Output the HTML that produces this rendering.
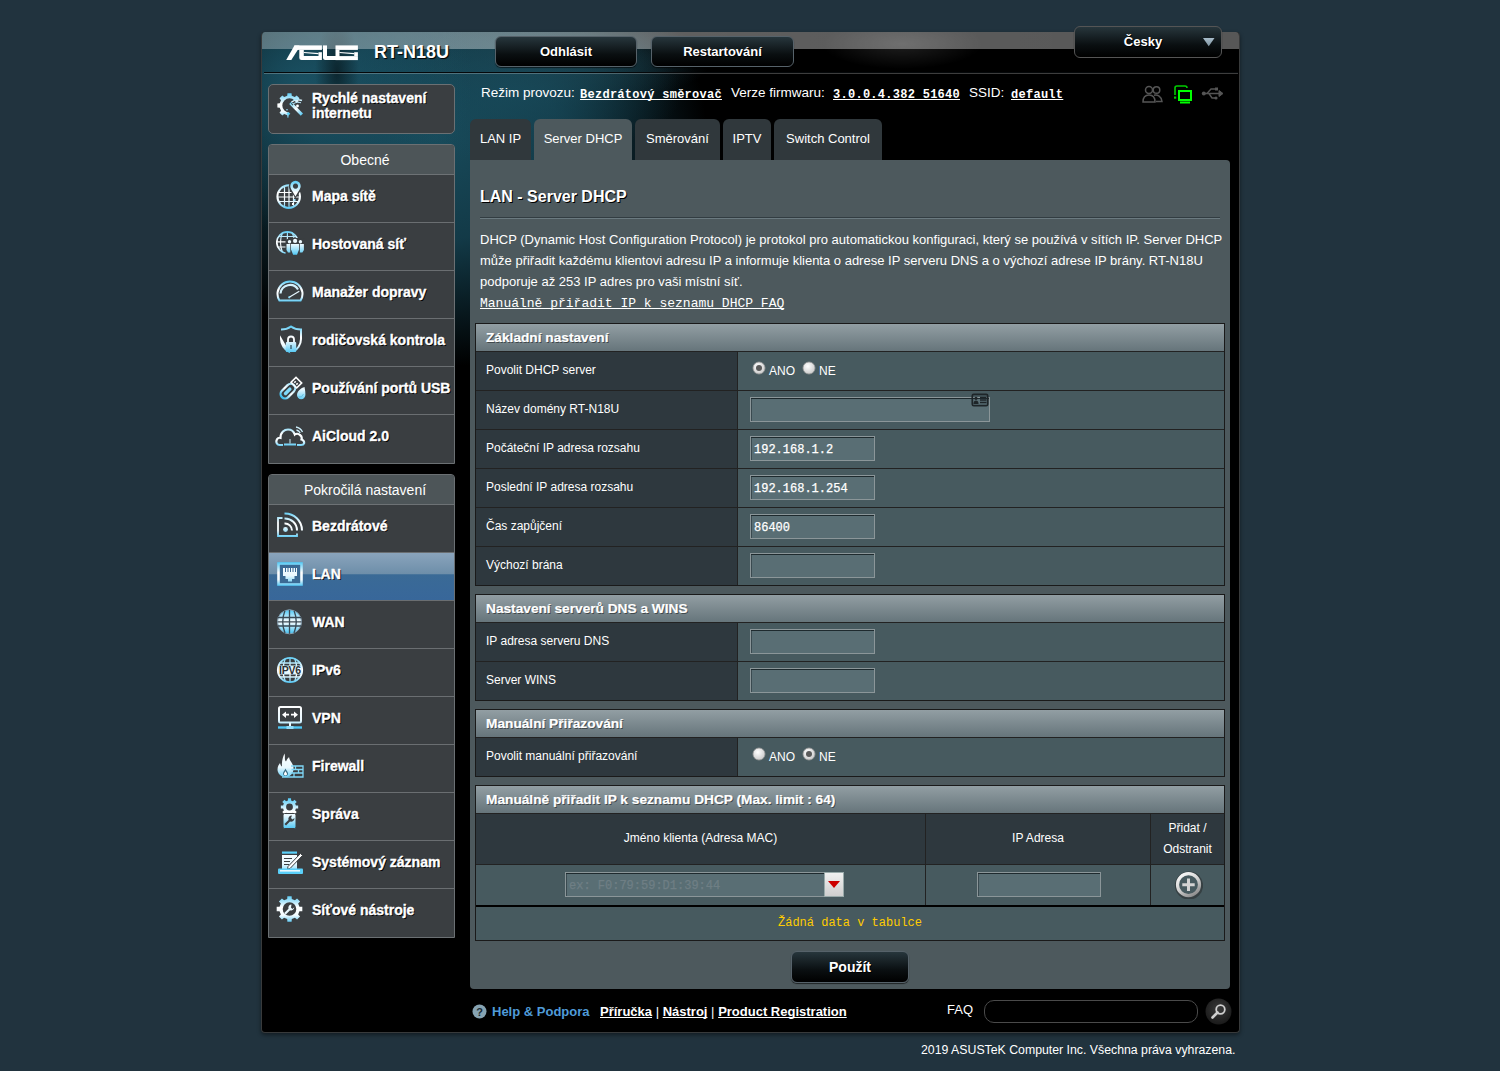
<!DOCTYPE html>
<html><head><meta charset="utf-8">
<style>
*{box-sizing:border-box;margin:0;padding:0}
html,body{width:1500px;height:1071px;overflow:hidden;background:#21333e;font-family:"Liberation Sans",sans-serif;color:#fff}
.a{position:absolute}
#wrap{position:absolute;left:261px;top:32px;width:979px;height:1001px;background:#000;border-radius:4px;overflow:hidden;border:1px solid #383a3b;border-top:none;box-shadow:0 2px 4px rgba(0,0,0,.45)}
#hdrbg{position:absolute;left:0;top:0;width:979px;height:420px;
 background:
  radial-gradient(22px 55px at 75px 40px, rgba(0,0,0,.5), rgba(0,0,0,0) 100%),
  radial-gradient(80px 25px at 640px 12px, rgba(255,255,255,.12), rgba(255,255,255,0) 100%),
  radial-gradient(170px 150px at 40px 50px, rgba(28,86,105,.85), rgba(28,86,105,0) 100%),
  radial-gradient(170px 70px at 250px 60px, rgba(24,74,90,.8), rgba(24,74,90,0) 100%),
  radial-gradient(150px 45px at 300px 28px, rgba(30,66,78,.85), rgba(30,66,78,0) 100%),
  radial-gradient(270px 230px at 175px 105px, rgba(24,74,90,1) 0%, rgba(22,68,84,.85) 45%, rgba(20,62,78,0) 100%),
  #000;}
#topband{position:absolute;left:0;top:0;width:979px;height:17px;
 background:linear-gradient(90deg,rgba(255,255,255,.3) 0px,rgba(255,255,255,.36) 200px,rgba(255,255,255,.38) 330px,rgba(255,255,255,.36) 600px,rgba(255,255,255,.34) 979px)}
#hline{position:absolute;left:2px;top:40px;width:974px;height:2px;background:linear-gradient(#05080a 50%,rgba(255,255,255,.24) 50%)}
.btn{position:absolute;border-radius:6px;border:1px solid #56626a;background:linear-gradient(#27363c,#0a0f11 60%,#000);box-shadow:0 1px 1px rgba(0,0,0,.6);font-weight:bold;font-size:13px;text-align:center;color:#fff;text-shadow:1px 1px 0 #000}
.sbox{position:absolute;left:268px;width:187px;background:#3a3e41;border:1px solid #6b7073;border-radius:4px 4px 0 0;overflow:hidden}
.shead{height:30px;background:#4d5558;border-bottom:1px solid #6d7275;text-align:center;font-size:14px;line-height:30px;color:#fff;padding-left:7px}
.mi{position:relative;height:48px;border-top:1px solid #6a6e71;font-weight:bold;font-size:14px;line-height:42px;padding-left:43px;text-shadow:1px 1px 0 #000;color:#fff;white-space:nowrap;-webkit-text-stroke:0.35px #fff}
.shead + .mi{border-top:none;height:47px}
.mi.sel{background:linear-gradient(#8aa4bc 0,#6d8ea9 45%,#3a6a96 46%,#38679a 100%)}
.tab{position:absolute;top:119px;height:41px;background:#30383c;border-radius:6px 6px 0 0;font-size:13px;line-height:40px;text-align:center;color:#fff}
.tab.on{background:#4d595d}
#panel{position:absolute;left:470px;top:160px;width:760px;height:829px;background:#4d595d;border-radius:0 4px 4px 4px}
.ft{position:absolute;left:475px;width:750px;border:1px solid #1a1a1a}
.th{height:27px;background:linear-gradient(#929ea3,#66757b);font-weight:bold;font-size:13.7px;line-height:27px;padding-left:10px;text-shadow:1px 1px 0 rgba(0,0,0,.45);white-space:nowrap;-webkit-text-stroke:0.2px #fff}
.row{position:relative;height:39px;border-top:1px solid #222}
.row .l{position:absolute;left:0;top:0;width:262px;height:38px;background:#2e383e;border-right:1px solid #222;font-size:12px;line-height:36px;padding-left:10px}
.row .v{position:absolute;left:262px;top:0;right:0;height:38px;background:#475a5f}
.inp{position:absolute;background:#596e74;border:1px solid #8b9699;box-shadow:inset 0 1px 0 #1e2a2e,inset 1px 0 0 #3a4a50;font-family:"Liberation Mono",monospace;font-size:12px;line-height:23px;padding-left:3px;padding-top:2px;color:#fff;white-space:nowrap;-webkit-text-stroke:0.25px currentColor}
.mono{font-family:"Liberation Mono",monospace}
u,.ul{text-decoration:underline;text-decoration-skip-ink:none}
*{text-decoration-skip-ink:none}
</style></head>
<body>
<div id="wrap">
 <div id="hdrbg"></div>
 <div id="topband"></div>
 <div id="hline"></div>
</div>
<svg class="a" style="left:282px;top:40px" width="80" height="26" viewBox="0 0 80 26">
 <g fill="#fff">
  <path d="M4.2 20.1 L9.3 20.1 L17.3 7.5 L17.3 5.4 L12.4 5.4Z"/>
  <rect x="12.4" y="5.4" width="27.5" height="4.5"/>
  <path d="M17.3 9.9 H21.8 V16.1 H17.3Z"/>
  <path d="M21.8 11.9 L36.5 12.9 L36.5 14.2 L21.8 13.1Z"/>
  <path d="M36.5 12.2 H39.9 V16.1 H36.5Z"/>
  <path d="M17.3 16.1 H39.9 V20.1 H19.5 Q17.3 20.1 17.3 18Z"/>
  <path d="M41 5.4 H45 V16.1 H41Z"/>
  <path d="M41 16.1 H57.5 V20.1 H43.2 Q41 20.1 41 18Z"/>
  <rect x="53.5" y="5.4" width="22.4" height="4.5"/>
  <path d="M53.5 9.9 H57.5 V16.1 H53.5Z"/>
  <path d="M57.5 11.9 L72.2 12.9 L72.2 14.2 L57.5 13.1Z"/>
  <path d="M72.2 12.2 H75.9 V16.1 H72.2Z"/>
  <path d="M53.5 16.1 H75.9 V20.1 H53.5Z"/>
 </g>
</svg>
<div class="a" style="left:374px;top:41px;font-size:18px;font-weight:bold;line-height:22px;text-shadow:1px 1px 1px #000">RT-N18U</div>
<div class="btn" style="left:495px;top:36px;width:142px;height:31px;line-height:29px">Odhlásit</div>
<div class="btn" style="left:651px;top:36px;width:143px;height:31px;line-height:29px">Restartování</div>
<div class="btn" style="left:1074px;top:26px;width:148px;height:32px;line-height:30px;border-color:#555;padding-right:10px">Česky</div>
<svg class="a" style="left:1203px;top:38px" width="12" height="9"><defs><linearGradient id="tg" x1="0" y1="0" x2="0" y2="1"><stop offset="0" stop-color="#a9bdca"/><stop offset="1" stop-color="#7f95a3"/></linearGradient></defs><path d="M0 0 L11.5 0 L5.75 8.2Z" fill="url(#tg)"/></svg>
<div class="a" style="left:481px;top:85px;font-size:13.5px;line-height:16px;white-space:nowrap">Režim provozu:</div>
<div class="a mono" style="left:580px;top:87px;font-size:12px;letter-spacing:.27px;line-height:16px;font-weight:bold;white-space:nowrap"><u>Bezdrátový směrovač</u></div>
<div class="a" style="left:731px;top:85px;font-size:13.5px;line-height:16px;white-space:nowrap">Verze firmwaru:</div>
<div class="a mono" style="left:833px;top:87px;font-size:12px;letter-spacing:.27px;line-height:16px;font-weight:bold;white-space:nowrap"><u>3.0.0.4.382_51640</u></div>
<div class="a" style="left:969px;top:85px;font-size:13.5px;line-height:16px;white-space:nowrap">SSID:</div>
<div class="a mono" style="left:1011px;top:87px;font-size:12px;letter-spacing:.27px;line-height:16px;font-weight:bold;white-space:nowrap"><u>default</u></div>

<div class="sbox" style="top:84px;height:50px;border-radius:5px"></div>
<div class="a" style="left:312px;top:91px;font-weight:bold;font-size:14px;line-height:15px;text-shadow:1px 1px 0 #000;-webkit-text-stroke:0.35px #fff">Rychlé nastavení<br>internetu</div>
<div class="sbox" style="top:144px;height:320px">
 <div class="shead">Obecné</div>
 <div class="mi">Mapa sítě</div>
 <div class="mi">Hostovaná síť</div>
 <div class="mi">Manažer dopravy</div>
 <div class="mi">rodičovská kontrola</div>
 <div class="mi">Používání portů USB</div>
 <div class="mi">AiCloud 2.0</div>
</div>
<div class="sbox" style="top:474px;height:464px">
 <div class="shead">Pokročilá nastavení</div>
 <div class="mi">Bezdrátové</div>
 <div class="mi sel">LAN</div>
 <div class="mi">WAN</div>
 <div class="mi">IPv6</div>
 <div class="mi">VPN</div>
 <div class="mi">Firewall</div>
 <div class="mi">Správa</div>
 <div class="mi">Systémový záznam</div>
 <div class="mi">Síťové nástroje</div>
</div>

<div class="tab" style="left:470px;width:61px">LAN IP</div>
<div class="tab on" style="left:534px;width:98px">Server DHCP</div>
<div class="tab" style="left:635px;width:85px">Směrování</div>
<div class="tab" style="left:723px;width:48px">IPTV</div>
<div class="tab" style="left:774px;width:108px">Switch Control</div>

<div id="panel"></div>
<div class="a" style="left:480px;top:187px;font-size:16px;font-weight:bold;line-height:20px;text-shadow:1px 1px 0 #000">LAN - Server DHCP</div>
<div class="a" style="left:480px;top:217px;width:740px;height:1px;background:#323d42"></div><div class="a" style="left:480px;top:218px;width:740px;height:1px;background:#6b7a80"></div>
<div class="a" style="left:480px;top:229px;width:750px;font-size:13px;line-height:21px;white-space:nowrap">DHCP (Dynamic Host Configuration Protocol) je protokol pro automatickou konfiguraci, který se používá v sítích IP. Server DHCP<br>může přiřadit každému klientovi adresu IP a informuje klienta o adrese IP serveru DNS a o výchozí adrese IP brány. RT-N18U<br>podporuje až 253 IP adres pro vaši místní síť.<br><span class="mono" style="font-size:13px;text-decoration:underline">Manuálně přiřadit IP k seznamu DHCP FAQ</span></div>

<div class="ft" style="top:323px;height:263px">
 <div class="th">Základní nastavení</div>
 <div class="row"><div class="l">Povolit DHCP server</div><div class="v"></div></div>
 <div class="row"><div class="l">Název domény RT-N18U</div><div class="v"></div></div>
 <div class="row"><div class="l">Počáteční IP adresa rozsahu</div><div class="v"></div></div>
 <div class="row"><div class="l">Poslední IP adresa rozsahu</div><div class="v"></div></div>
 <div class="row"><div class="l">Čas zapůjčení</div><div class="v"></div></div>
 <div class="row"><div class="l">Výchozí brána</div><div class="v"></div></div>
</div>
<div class="ft" style="top:594px;height:107px">
 <div class="th">Nastavení serverů DNS a WINS</div>
 <div class="row"><div class="l">IP adresa serveru DNS</div><div class="v"></div></div>
 <div class="row"><div class="l">Server WINS</div><div class="v"></div></div>
</div>
<div class="ft" style="top:709px;height:68px">
 <div class="th">Manuální Přiřazování</div>
 <div class="row"><div class="l">Povolit manuální přiřazování</div><div class="v"></div></div>
</div>
<div class="ft" style="top:785px;height:156px;background:#475a5f">
 <div class="th">Manuálně přiřadit IP k seznamu DHCP (Max. limit : 64)</div>
 <div class="a" style="left:0;top:27px;width:748px;height:51px;background:#2e383e;border-top:1px solid #222"></div>
 <div class="a" style="left:0;top:78px;width:748px;height:42px;background:#475a5f;border-top:1px solid #222"></div>
 <div class="a" style="left:449px;top:27px;width:1px;height:93px;background:#222"></div>
 <div class="a" style="left:674px;top:27px;width:1px;height:93px;background:#222"></div>
 <div class="a" style="left:0;top:119px;width:748px;height:2px;background:#000"></div>
</div>
<div class="a" style="left:476px;top:813px;width:449px;height:51px;font-size:12px;line-height:51px;text-align:center">Jméno klienta (Adresa MAC)</div>
<div class="a" style="left:926px;top:813px;width:224px;height:51px;font-size:12px;line-height:51px;text-align:center">IP Adresa</div>
<div class="a" style="left:1151px;top:818px;width:73px;font-size:12px;line-height:21px;text-align:center">Přidat /<br>Odstranit</div>
<div class="inp" style="left:565px;top:872px;width:260px;height:25px;color:#6f7f85">ex: F0:79:59:D1:39:44</div>
<div class="a" style="left:824px;top:872px;width:20px;height:25px;background:linear-gradient(#f0f0f0,#cfcfcf);border:1px solid #9aa;"></div>
<svg class="a" style="left:828px;top:881px" width="12" height="8"><path d="M0 0 H12 L6 7Z" fill="#c00"/></svg>
<div class="inp" style="left:977px;top:872px;width:124px;height:25px"></div>
<svg class="a" style="left:1174px;top:870px" width="29" height="29" viewBox="0 0 29 29">
 <defs><linearGradient id="pg" x1="0.2" y1="0" x2="0.8" y2="1"><stop offset="0" stop-color="#f8f8f8"/><stop offset=".5" stop-color="#d0d0d0"/><stop offset="1" stop-color="#8a8a8a"/></linearGradient></defs>
 <circle cx="15" cy="15.5" r="12.5" fill="none" stroke="#222" stroke-opacity=".45" stroke-width="3.2"/>
 <circle cx="14.5" cy="14.7" r="11" fill="none" stroke="url(#pg)" stroke-width="3.2"/>
 <path d="M13 8.5 H16 V13.2 H20.7 V16.2 H16 V20.9 H13 V16.2 H8.3 V13.2 H13Z" fill="#d4d4d4"/>
</svg>
<div class="a mono" style="left:476px;top:908px;width:748px;height:33px;line-height:31px;font-size:12px;text-align:center;color:#ffcc00">Žádná data v tabulce</div>
<div class="inp" style="left:750px;top:397px;width:240px;height:25px"></div>
<svg class="a" style="left:971px;top:393px" width="18" height="14" viewBox="0 0 18 14"><rect x="1.3" y="1.3" width="15.4" height="11.4" rx="1.5" fill="none" stroke="#1e2528" stroke-width="1.7"/><circle cx="5" cy="5.3" r="1.6" fill="#1e2528"/><path d="M2.4 11 C2.6 8.5 3.6 7.6 5 7.6 C6.4 7.6 7.4 8.5 7.6 11Z" fill="#1e2528"/><path d="M9 4.5 H15.5 M9 7 H15.5 M9 9.5 H15.5" stroke="#1e2528" stroke-width="1.3"/></svg>
<div class="inp" style="left:750px;top:436px;width:125px;height:25px">192.168.1.2</div>
<div class="inp" style="left:750px;top:475px;width:125px;height:25px">192.168.1.254</div>
<div class="inp" style="left:750px;top:514px;width:125px;height:25px">86400</div>
<div class="inp" style="left:750px;top:553px;width:125px;height:25px"></div>
<div class="inp" style="left:750px;top:629px;width:125px;height:25px"></div>
<div class="inp" style="left:750px;top:668px;width:125px;height:25px"></div>
<svg class="a" style="left:752px;top:361px" width="14" height="14"><defs><radialGradient id="rg" cx=".4" cy=".35" r=".7"><stop offset="0" stop-color="#fff"/><stop offset="1" stop-color="#c8c8c8"/></radialGradient></defs><circle cx="7" cy="7" r="6" fill="url(#rg)" stroke="#9a9a9a" stroke-width=".8"/><circle cx="7" cy="7" r="3" fill="#5a5a5a"/></svg>
<svg class="a" style="left:802px;top:361px" width="14" height="14"><circle cx="7" cy="7" r="6" fill="url(#rg)" stroke="#9a9a9a" stroke-width=".8"/></svg>
<div class="a" style="left:769px;top:363px;font-size:12px;line-height:16px">ANO</div>
<div class="a" style="left:819px;top:363px;font-size:12px;line-height:16px">NE</div>
<svg class="a" style="left:752px;top:747px" width="14" height="14"><circle cx="7" cy="7" r="6" fill="url(#rg)" stroke="#9a9a9a" stroke-width=".8"/></svg>
<svg class="a" style="left:802px;top:747px" width="14" height="14"><circle cx="7" cy="7" r="6" fill="url(#rg)" stroke="#9a9a9a" stroke-width=".8"/><circle cx="7" cy="7" r="3" fill="#5a5a5a"/></svg>
<div class="a" style="left:769px;top:749px;font-size:12px;line-height:16px">ANO</div>
<div class="a" style="left:819px;top:749px;font-size:12px;line-height:16px">NE</div>

<!-- footer -->
<svg class="a" style="left:472px;top:1004px" width="15" height="15"><circle cx="7.5" cy="7.5" r="7" fill="#86a3b2"/><text x="7.5" y="11.8" text-anchor="middle" font-family="Liberation Sans" font-weight="bold" font-size="11" fill="#1a2a33">?</text></svg>
<div class="a" style="left:492px;top:1003px;font-size:13px;font-weight:bold;line-height:18px;color:#4f9bd8;white-space:nowrap">Help &amp; Podpora</div>
<div class="a" style="left:600px;top:1003px;font-size:13px;line-height:18px;font-weight:bold;white-space:nowrap"><u>Příručka</u> <span style="font-weight:normal">|</span> <u>Nástroj</u> <span style="font-weight:normal">|</span> <u>Product Registration</u></div>
<div class="a" style="left:947px;top:1001px;font-size:13px;line-height:18px">FAQ</div>
<div class="a" style="left:984px;top:1000px;width:214px;height:23px;border:1px solid #4a4a4a;border-radius:10px;background:#000"></div>
<svg class="a" style="left:1205px;top:998px" width="27" height="27"><defs><radialGradient id="sg" cx=".5" cy=".4" r=".6"><stop offset="0" stop-color="#3a3a3a"/><stop offset="1" stop-color="#1a1a1a"/></radialGradient></defs><circle cx="13.5" cy="13.5" r="13" fill="url(#sg)"/><circle cx="15.5" cy="11.5" r="4.3" fill="none" stroke="#cfcfcf" stroke-width="1.8"/><path d="M12.5 14.5 L7.5 19.5" stroke="#cfcfcf" stroke-width="2.6" stroke-linecap="round"/></svg>
<div class="a" style="left:921px;top:1042px;font-size:12.3px;line-height:16px;white-space:nowrap">2019 ASUSTeK Computer Inc. Všechna práva vyhrazena.</div>

<!-- status icons -->
<svg class="a" style="left:1142px;top:85px" width="22" height="18" viewBox="0 0 22 18" fill="none" stroke="#555" stroke-width="1.5"><circle cx="7" cy="5" r="3.5"/><path d="M1 17 C1 12 3.5 10 7 10 C10.5 10 13 12 13 17Z"/><circle cx="14.5" cy="5" r="3.3"/><path d="M12 10.2 C15.5 9.5 19.5 11 20 16.5 H14"/></svg>
<svg class="a" style="left:1173px;top:85px" width="20" height="19" viewBox="0 0 20 19"><path d="M2 10 V3 a2 2 0 0 1 2 -2 H12 a2 2 0 0 1 2 2" fill="none" stroke="#0c0" stroke-width="1.6"/><rect x="1" y="11.5" width="2.2" height="2.2" fill="#0c0"/><rect x="6" y="6" width="12" height="9" fill="none" stroke="#0f0" stroke-width="2"/><rect x="7" y="16.5" width="10" height="2" fill="#0f0"/></svg>
<svg class="a" style="left:1201px;top:86px" width="23" height="15" viewBox="0 0 23 15" fill="none" stroke="#555"><path d="M2.5 7.5 H21" stroke-width="1.5"/><path d="M18 4.5 L22 7.5 L18 10.5Z" fill="#555"/><circle cx="2.8" cy="7.5" r="2" fill="#555" stroke="none"/><path d="M6 7.5 L10 3 H14" stroke-width="1.4"/><path d="M8 7.5 L11 12 H14" stroke-width="1.4"/><rect x="14" y="1.5" width="3" height="3" fill="#555" stroke="none"/><circle cx="15" cy="12" r="1.6" fill="#555" stroke="none"/></svg>
<div class="btn" style="left:791px;top:951px;width:118px;height:32px;line-height:30px;font-size:14px">Použít</div>
<svg width="0" height="0" style="position:absolute"><defs>
<linearGradient id="ig" x1="0" y1="0" x2="0" y2="1"><stop offset="0" stop-color="#4ec8f5"/><stop offset=".42" stop-color="#ffffff"/><stop offset=".7" stop-color="#f2fbff"/><stop offset="1" stop-color="#35bdf2"/></linearGradient>
<linearGradient id="igr" x1="0" y1="1" x2="0" y2="0"><stop offset="0" stop-color="#3cc0f2"/><stop offset=".5" stop-color="#ffffff"/><stop offset="1" stop-color="#4ec8f5"/></linearGradient>
<linearGradient id="ig2" x1="0" y1="0" x2="1" y2="1"><stop offset="0" stop-color="#55cdf7"/><stop offset=".5" stop-color="#ffffff"/><stop offset="1" stop-color="#3cc0f2"/></linearGradient>
<linearGradient id="igw" x1="0" y1="0" x2="0" y2="1"><stop offset="0" stop-color="#c9effd"/><stop offset=".5" stop-color="#ffffff"/><stop offset="1" stop-color="#d8f3fe"/></linearGradient>
<linearGradient id="usbg" x1="0" y1="0" x2="1" y2="0"><stop offset="0" stop-color="#3cc0f2"/><stop offset=".5" stop-color="#ffffff"/><stop offset="1" stop-color="#8fdcf8"/></linearGradient>
<linearGradient id="igb" x1="0" y1="0" x2="0" y2="1"><stop offset="0" stop-color="#ffffff"/><stop offset=".55" stop-color="#e9f8fe"/><stop offset="1" stop-color="#3fc2f3"/></linearGradient>
</defs></svg>
<svg class="a" style="left:277px;top:92px" width="28" height="28" viewBox="0 0 28 28"><defs><linearGradient id="u1" gradientUnits="userSpaceOnUse" x1="0" y1="0" x2="0" y2="28"><stop offset="0" stop-color="#4ec8f5"/><stop offset=".42" stop-color="#ffffff"/><stop offset=".7" stop-color="#f2fbff"/><stop offset="1" stop-color="#35bdf2"/></linearGradient><linearGradient id="v1" gradientUnits="userSpaceOnUse" x1="0" y1="0" x2="0" y2="28"><stop offset="0" stop-color="#ffffff"/><stop offset=".55" stop-color="#e9f8fe"/><stop offset="1" stop-color="#3fc2f3"/></linearGradient></defs><path fill="url(#u1)" fill-rule="evenodd" d="M10.24 3.76 L10.48 1.37 L14.52 1.37 L14.76 3.76 L17.79 5.01 L19.65 3.49 L22.51 6.35 L20.99 8.21 L22.24 11.24 L24.63 11.48 L24.63 15.52 L22.24 15.76 L20.99 18.79 L22.51 20.65 L19.65 23.51 L17.79 21.99 L14.76 23.24 L14.52 25.63 L10.48 25.63 L10.24 23.24 L7.21 21.99 L5.35 23.51 L2.49 20.65 L4.01 18.79 L2.76 15.76 L0.37 15.52 L0.37 11.48 L2.76 11.24 L4.01 8.21 L2.49 6.35 L5.35 3.49 L7.21 5.01Z M5.30 13.50 a7.2 7.2 0 1 0 14.4 0 a7.2 7.2 0 1 0 -14.4 0Z"/><path fill="#3a3e41" d="M12.5 13.5 L30 6 L30 30 L11 30Z"/><path fill="none" stroke="url(#ig2)" stroke-width="1.5" d="M14.5 10 C17.5 7.5 21.5 7.2 25 8.5"/><path fill="none" stroke="#bfe9fb" stroke-width="1" d="M16 12 C19 10 21.5 10 24 10.8"/><path fill="url(#ig2)" d="M12.2 12 L14.4 9.8 L26 21.6 L23.8 23.8Z"/><path fill="#3a3e41" d="M13.8 11.6 L14.5 10.9 L16.3 12.7 L15.6 13.4Z"/><path fill="#5ad0f9" d="M11.5 20 L13.3 21.8 L11.5 23.6 L9.7 21.8Z"/><circle cx="20.5" cy="14" r="1.4" fill="#fff"/><circle cx="10" cy="17.8" r=".8" fill="#9fe0fa"/></svg>
<svg class="a" style="left:276px;top:180px" width="28" height="30" viewBox="0 0 28 30"><defs><linearGradient id="u2" gradientUnits="userSpaceOnUse" x1="0" y1="0" x2="0" y2="30"><stop offset="0" stop-color="#4ec8f5"/><stop offset=".42" stop-color="#ffffff"/><stop offset=".7" stop-color="#f2fbff"/><stop offset="1" stop-color="#35bdf2"/></linearGradient><linearGradient id="v2" gradientUnits="userSpaceOnUse" x1="0" y1="0" x2="0" y2="30"><stop offset="0" stop-color="#ffffff"/><stop offset=".55" stop-color="#e9f8fe"/><stop offset="1" stop-color="#3fc2f3"/></linearGradient></defs><circle cx="12.7" cy="16.6" r="11.3" fill="none" stroke="url(#u2)" stroke-width="2"/><g stroke="url(#u2)" stroke-width="1.2" fill="none"><path d="M2 12.5 H23 M2 17 H23 M3 21.5 H22"/><path d="M8.5 6 V27 M13 5 V28 M17.5 6 V27"/></g><path fill="#3a3e41" d="M19.5 -0.7 a6.7 6.7 0 0 1 6.7 6.7 c0 3.5 -3.3 6.8 -6.7 12.2 c-3.4 -5.4 -6.7 -8.7 -6.7 -12.2 a6.7 6.7 0 0 1 6.7 -6.7Z"/><path fill="url(#u2)" d="M19.5 0.8 a5.2 5.2 0 0 1 5.2 5.2 c0 3 -3 6 -5.2 10.5 c-2.2 -4.5 -5.2 -7.5 -5.2 -10.5 a5.2 5.2 0 0 1 5.2 -5.2Z M19.5 3.5 a2.6 2.6 0 1 0 0.01 0Z" fill-rule="evenodd"/><rect x="17.5" y="19" width="2" height="2" fill="#9fe0fa"/><rect x="16" y="23" width="2" height="2" fill="#fff"/></svg>
<svg class="a" style="left:276px;top:230px" width="29" height="26" viewBox="0 0 29 26"><defs><linearGradient id="u3" gradientUnits="userSpaceOnUse" x1="0" y1="0" x2="0" y2="26"><stop offset="0" stop-color="#4ec8f5"/><stop offset=".42" stop-color="#ffffff"/><stop offset=".7" stop-color="#f2fbff"/><stop offset="1" stop-color="#35bdf2"/></linearGradient><linearGradient id="v3" gradientUnits="userSpaceOnUse" x1="0" y1="0" x2="0" y2="26"><stop offset="0" stop-color="#ffffff"/><stop offset=".55" stop-color="#e9f8fe"/><stop offset="1" stop-color="#3fc2f3"/></linearGradient></defs><circle cx="11.4" cy="12.5" r="10.6" fill="none" stroke="url(#u3)" stroke-width="1.7"/><g stroke="url(#u3)" stroke-width="1.2" fill="none"><path d="M2 6.5 H21 M1 11.8 H22 M2 17 H21"/><path d="M6.5 2.5 Q2.5 12.5 6.5 22.5 M11.4 1.8 V23.2 M16.3 2.5 Q20.3 12.5 16.3 22.5"/></g><path fill="#3a3e41" d="M9.5 10 Q14 7 19 8 Q24 7.5 29 9 V26 H9.5Z"/><g fill="url(#v3)"><circle cx="13.5" cy="11.8" r="1.7"/><circle cx="19.1" cy="10.9" r="2.1"/><circle cx="24.4" cy="11.8" r="1.7"/><path d="M10.5 13.9 H14.3 V22.6 H12 L10.5 20Z"/><path d="M15 13.9 H23.1 V19.5 L21 24.7 H17.1 L15 19.5Z"/><path d="M23.9 13.9 H27.9 V20 L26.4 22.6 H23.9Z"/></g></svg>
<svg class="a" style="left:276px;top:280px" width="29" height="23" viewBox="0 0 29 23"><defs><linearGradient id="u4" gradientUnits="userSpaceOnUse" x1="0" y1="0" x2="0" y2="23"><stop offset="0" stop-color="#4ec8f5"/><stop offset=".42" stop-color="#ffffff"/><stop offset=".7" stop-color="#f2fbff"/><stop offset="1" stop-color="#35bdf2"/></linearGradient><linearGradient id="v4" gradientUnits="userSpaceOnUse" x1="0" y1="0" x2="0" y2="23"><stop offset="0" stop-color="#ffffff"/><stop offset=".55" stop-color="#e9f8fe"/><stop offset="1" stop-color="#3fc2f3"/></linearGradient></defs><path fill="none" stroke="url(#u4)" stroke-width="2" d="M3.4 20.5 A12.5 12.5 0 1 1 24.6 20.5 Z"/><path fill="none" stroke="#d4f1fc" stroke-width="2.2" d="M4.5 13.5 A9.5 9.5 0 0 1 22 9.5"/><path stroke="#e6f7fe" stroke-width="1.3" d="M13.2 17.3 L23.3 11.3"/><circle cx="13.2" cy="17.3" r="1.1" fill="#8fdcf8"/></svg>
<svg class="a" style="left:279px;top:325px" width="24" height="29" viewBox="0 0 24 29"><defs><linearGradient id="u5" gradientUnits="userSpaceOnUse" x1="0" y1="0" x2="0" y2="29"><stop offset="0" stop-color="#4ec8f5"/><stop offset=".42" stop-color="#ffffff"/><stop offset=".7" stop-color="#f2fbff"/><stop offset="1" stop-color="#35bdf2"/></linearGradient><linearGradient id="v5" gradientUnits="userSpaceOnUse" x1="0" y1="0" x2="0" y2="29"><stop offset="0" stop-color="#ffffff"/><stop offset=".55" stop-color="#e9f8fe"/><stop offset="1" stop-color="#3fc2f3"/></linearGradient></defs><path fill="none" stroke="url(#u5)" stroke-width="2" d="M2 4.5 C6.5 4.5 9.5 3.3 12 1.5 C14.5 3.3 17.5 4.5 22 4.5 V14 C22 20 18 24.5 15 26 M9 26 C6 24.5 2 20 2 14Z"/><path fill="none" stroke="url(#u5)" stroke-width="1.8" d="M9 17 V14.5 a3 3 0 0 1 6 0 V17"/><rect x="6.8" y="17" width="10.4" height="10" rx="1" fill="url(#v5)"/><rect x="11.4" y="20" width="1.2" height="4" fill="#2f4a55"/></svg>
<svg class="a" style="left:277px;top:374px" width="29" height="28" viewBox="0 0 29 28"><defs><linearGradient id="u6" gradientUnits="userSpaceOnUse" x1="0" y1="0" x2="0" y2="28"><stop offset="0" stop-color="#4ec8f5"/><stop offset=".42" stop-color="#ffffff"/><stop offset=".7" stop-color="#f2fbff"/><stop offset="1" stop-color="#35bdf2"/></linearGradient><linearGradient id="v6" gradientUnits="userSpaceOnUse" x1="0" y1="0" x2="0" y2="28"><stop offset="0" stop-color="#ffffff"/><stop offset=".55" stop-color="#e9f8fe"/><stop offset="1" stop-color="#3fc2f3"/></linearGradient></defs><g transform="rotate(-45 13 15)"><rect x="1.5" y="10.5" width="17" height="9" rx="4.5" fill="none" stroke="url(#usbg)" stroke-width="2.2"/><rect x="5" y="13.3" width="9.5" height="3.4" rx="1.7" fill="#7fd8f8"/><rect x="18.5" y="11" width="7" height="8" fill="none" stroke="#fff" stroke-width="1.6"/><rect x="20.5" y="12.8" width="2" height="1.6" fill="#fff"/><rect x="20.5" y="15.6" width="2" height="1.6" fill="#fff"/></g><path fill="url(#v6)" d="M27.5 13 C24 14 20 17 20 21 a4.2 4.2 0 0 0 8.4 0 C28.4 18 28 15 27.5 13Z"/><path fill="none" stroke="#5bb9d8" stroke-width=".8" d="M21.5 23 Q25 24 26.5 20"/></svg>
<svg class="a" style="left:275px;top:424px" width="31" height="24" viewBox="0 0 31 24"><defs><linearGradient id="u7" gradientUnits="userSpaceOnUse" x1="0" y1="0" x2="0" y2="24"><stop offset="0" stop-color="#4ec8f5"/><stop offset=".42" stop-color="#ffffff"/><stop offset=".7" stop-color="#f2fbff"/><stop offset="1" stop-color="#35bdf2"/></linearGradient><linearGradient id="v7" gradientUnits="userSpaceOnUse" x1="0" y1="0" x2="0" y2="24"><stop offset="0" stop-color="#ffffff"/><stop offset=".55" stop-color="#e9f8fe"/><stop offset="1" stop-color="#3fc2f3"/></linearGradient></defs><path fill="none" stroke="url(#u7)" stroke-width="2.2" d="M8 21 H4.5 C2 21 1 18.5 1.5 16.5 C2 14.5 4 13.5 5.5 13.8 C5.5 8 9.5 5.5 13 5.5 C16.5 5.5 19 8 19.8 10.5 C21 9.5 23.5 9.5 25 11 C26.5 12 27 14 26.5 15.5 C28.5 16 29.5 18 29 19.5 C28.5 21 27 21 26 21 H22"/><path fill="none" stroke="#cdeffc" stroke-width="1.3" d="M21 3 C24 3.5 26 5 27.5 8 M21.5 6 C23.5 6.5 24.5 7.5 25.2 9"/><rect x="9" y="19.5" width="12" height="2" fill="url(#v7)"/><path stroke="#cdeffc" stroke-width="1" d="M15 15 V19.5"/></svg>
<svg class="a" style="left:276px;top:511px" width="29" height="28" viewBox="0 0 29 28"><defs><linearGradient id="u8" gradientUnits="userSpaceOnUse" x1="0" y1="0" x2="0" y2="28"><stop offset="0" stop-color="#4ec8f5"/><stop offset=".42" stop-color="#ffffff"/><stop offset=".7" stop-color="#f2fbff"/><stop offset="1" stop-color="#35bdf2"/></linearGradient><linearGradient id="v8" gradientUnits="userSpaceOnUse" x1="0" y1="0" x2="0" y2="28"><stop offset="0" stop-color="#ffffff"/><stop offset=".55" stop-color="#e9f8fe"/><stop offset="1" stop-color="#3fc2f3"/></linearGradient></defs><path fill="none" stroke="url(#u8)" stroke-width="1.8" d="M6.5 7 H2 V25 H21 V22.5"/><path fill="none" stroke="url(#u8)" stroke-width="2" d="M8.5 2.5 A17 17 0 0 1 26 19.5 M8.5 7.5 A12 12 0 0 1 21 19.5 M8.5 12.5 A7 7 0 0 1 16 19.5"/><circle cx="9.5" cy="18.5" r="2.4" fill="url(#v8)"/></svg>
<svg class="a" style="left:277px;top:562px" width="27" height="25" viewBox="0 0 27 25"><defs><linearGradient id="u9" gradientUnits="userSpaceOnUse" x1="0" y1="0" x2="0" y2="25"><stop offset="0" stop-color="#4ec8f5"/><stop offset=".42" stop-color="#ffffff"/><stop offset=".7" stop-color="#f2fbff"/><stop offset="1" stop-color="#35bdf2"/></linearGradient><linearGradient id="v9" gradientUnits="userSpaceOnUse" x1="0" y1="0" x2="0" y2="25"><stop offset="0" stop-color="#ffffff"/><stop offset=".55" stop-color="#e9f8fe"/><stop offset="1" stop-color="#3fc2f3"/></linearGradient></defs><rect x="1.5" y="1.5" width="23" height="21" fill="#3b6a94" stroke="url(#u9)" stroke-width="2.6"/><path fill="url(#v9)" d="M6 6 H20 V14 H17.5 V17 H15 V19.5 H11 V17 H8.5 V14 H6Z"/><g fill="#3b6a94"><rect x="8" y="6" width="1" height="4"/><rect x="10.5" y="6" width="1" height="4"/><rect x="13" y="6" width="1" height="4"/><rect x="15.5" y="6" width="1" height="4"/><rect x="18" y="6" width="1" height="4"/></g></svg>
<svg class="a" style="left:276px;top:608px" width="28" height="28" viewBox="0 0 28 28"><defs><linearGradient id="u10" gradientUnits="userSpaceOnUse" x1="0" y1="0" x2="0" y2="28"><stop offset="0" stop-color="#4ec8f5"/><stop offset=".42" stop-color="#ffffff"/><stop offset=".7" stop-color="#f2fbff"/><stop offset="1" stop-color="#35bdf2"/></linearGradient><linearGradient id="v10" gradientUnits="userSpaceOnUse" x1="0" y1="0" x2="0" y2="28"><stop offset="0" stop-color="#ffffff"/><stop offset=".55" stop-color="#e9f8fe"/><stop offset="1" stop-color="#3fc2f3"/></linearGradient></defs><circle cx="13.5" cy="13.8" r="12" fill="url(#igr)" stroke="#8aa3b5" stroke-width="1"/><g stroke="#3a4a55" stroke-width="1.3" fill="none"><path d="M2 9.5 H25 M1.5 13.8 H25.5 M2 18 H25"/><path d="M13.5 2 V25.8"/><path d="M9 2.5 Q4.5 13.8 9 25 M18 2.5 Q22.5 13.8 18 25"/></g></svg>
<svg class="a" style="left:276px;top:656px" width="28" height="28" viewBox="0 0 28 28"><defs><linearGradient id="u11" gradientUnits="userSpaceOnUse" x1="0" y1="0" x2="0" y2="28"><stop offset="0" stop-color="#4ec8f5"/><stop offset=".42" stop-color="#ffffff"/><stop offset=".7" stop-color="#f2fbff"/><stop offset="1" stop-color="#35bdf2"/></linearGradient><linearGradient id="v11" gradientUnits="userSpaceOnUse" x1="0" y1="0" x2="0" y2="28"><stop offset="0" stop-color="#ffffff"/><stop offset=".55" stop-color="#e9f8fe"/><stop offset="1" stop-color="#3fc2f3"/></linearGradient></defs><circle cx="14" cy="14" r="12.2" fill="none" stroke="url(#u11)" stroke-width="1.8"/><g stroke="url(#u11)" stroke-width="1.3" fill="none"><path d="M3.5 7 H24.5 M3.5 21 H24.5"/><path d="M14 2 V26 M9.2 2.8 Q5 14 9.2 25.2 M18.8 2.8 Q23 14 18.8 25.2"/></g><path d="M2.2 9.5 H25.8 V18.5 H2.2Z" fill="url(#igw)"/><text x="14" y="18" text-anchor="middle" font-family="Liberation Sans" font-weight="bold" font-size="10.5" fill="#2b3034" letter-spacing="-0.2">IPV6</text></svg>
<svg class="a" style="left:277px;top:705px" width="27" height="27" viewBox="0 0 27 27"><defs><linearGradient id="u12" gradientUnits="userSpaceOnUse" x1="0" y1="0" x2="0" y2="27"><stop offset="0" stop-color="#4ec8f5"/><stop offset=".42" stop-color="#ffffff"/><stop offset=".7" stop-color="#f2fbff"/><stop offset="1" stop-color="#35bdf2"/></linearGradient><linearGradient id="v12" gradientUnits="userSpaceOnUse" x1="0" y1="0" x2="0" y2="27"><stop offset="0" stop-color="#ffffff"/><stop offset=".55" stop-color="#e9f8fe"/><stop offset="1" stop-color="#3fc2f3"/></linearGradient></defs><rect x="2" y="2" width="22" height="15.5" rx="1.5" fill="none" stroke="url(#v12)" stroke-width="2"/><path fill="#fff" d="M5 9.7 L9 6.5 V8.8 H12 V10.6 H9 V13 Z M21 9.7 L17 6.5 V8.8 H14 V10.6 H17 V13Z"/><path stroke="#e9f8fe" stroke-width="2" d="M13 17.5 V21"/><path stroke="#4ec8f5" stroke-width="2.4" d="M1 22.5 H25"/><rect x="9.5" y="21" width="7" height="3" fill="#8fdcf8"/></svg>
<svg class="a" style="left:276px;top:752px" width="29" height="28" viewBox="0 0 29 28"><defs><linearGradient id="u13" gradientUnits="userSpaceOnUse" x1="0" y1="0" x2="0" y2="28"><stop offset="0" stop-color="#4ec8f5"/><stop offset=".42" stop-color="#ffffff"/><stop offset=".7" stop-color="#f2fbff"/><stop offset="1" stop-color="#35bdf2"/></linearGradient><linearGradient id="v13" gradientUnits="userSpaceOnUse" x1="0" y1="0" x2="0" y2="28"><stop offset="0" stop-color="#ffffff"/><stop offset=".55" stop-color="#e9f8fe"/><stop offset="1" stop-color="#3fc2f3"/></linearGradient></defs><path fill="url(#v13)" d="M8.5 1.5 C9.5 5 8 7 10 9.5 C11 6.5 12.5 6 13 5 C13.5 9 17 11 17.5 15.5 C18 21 14 25 9.5 25 C5 25 1.5 21.5 1.5 17.5 C1.5 14 3 12.5 4 11 C4.5 13 5 14 6 14.5 C5.5 9 7 5 8.5 1.5Z"/><path fill="#3a6d85" d="M9.5 16.5 C10 18.5 12 19.5 12 21.5 C12 23 11 24 9.5 24 C8 24 7 23 7 21.5 C7 19.5 9 18.5 9.5 16.5Z"/><path fill="#fff" d="M9.5 19 C9.8 20 11 21 11 22 C11 23 10.3 23.4 9.5 23.4 C8.7 23.4 8 23 8 22 C8 21 9.2 20 9.5 19Z"/><g fill="none" stroke="#7fd8f8" stroke-width="1.3"><path d="M15 14 H27 V25 H6 M19.5 14 V17.5 M15.5 17.5 H27 M15 21 H27 M22.5 17.5 V21 M18 21 V25"/></g></svg>
<svg class="a" style="left:279px;top:798px" width="23" height="32" viewBox="0 0 23 32"><defs><linearGradient id="u14" gradientUnits="userSpaceOnUse" x1="0" y1="0" x2="0" y2="32"><stop offset="0" stop-color="#4ec8f5"/><stop offset=".42" stop-color="#ffffff"/><stop offset=".7" stop-color="#f2fbff"/><stop offset="1" stop-color="#35bdf2"/></linearGradient><linearGradient id="v14" gradientUnits="userSpaceOnUse" x1="0" y1="0" x2="0" y2="32"><stop offset="0" stop-color="#ffffff"/><stop offset=".55" stop-color="#e9f8fe"/><stop offset="1" stop-color="#3fc2f3"/></linearGradient></defs><path fill="url(#u14)" fill-rule="evenodd" d="M8.93 2.59 L8.95 0.34 L12.05 0.34 L12.07 2.59 L13.93 3.36 L15.53 1.78 L17.72 3.97 L16.14 5.57 L16.91 7.43 L19.16 7.45 L19.16 10.55 L16.91 10.57 L16.14 12.43 L17.72 14.03 L15.53 16.22 L13.93 14.64 L12.07 15.41 L12.05 17.66 L8.95 17.66 L8.93 15.41 L7.07 14.64 L5.47 16.22 L3.28 14.03 L4.86 12.43 L4.09 10.57 L1.84 10.55 L1.84 7.45 L4.09 7.43 L4.86 5.57 L3.28 3.97 L5.47 1.78 L7.07 3.36Z M7.10 9.00 a3.4 3.4 0 1 0 6.8 0 a3.4 3.4 0 1 0 -6.8 0Z"/><rect x="4" y="15.5" width="13" height="15" rx="1.5" fill="url(#v14)" stroke="#3a3e41" stroke-width="1"/><path fill="#3a3e41" d="M13 17.5 a3.5 3.5 0 0 0 -3.5 4.5 L5.5 26 L7 27.5 L11 23.5 a3.5 3.5 0 0 0 4.5 -3.5 L13.5 21.5 L12 20 Z"/></svg>
<svg class="a" style="left:277px;top:849px" width="28" height="27" viewBox="0 0 28 27"><defs><linearGradient id="u15" gradientUnits="userSpaceOnUse" x1="0" y1="0" x2="0" y2="27"><stop offset="0" stop-color="#4ec8f5"/><stop offset=".42" stop-color="#ffffff"/><stop offset=".7" stop-color="#f2fbff"/><stop offset="1" stop-color="#35bdf2"/></linearGradient><linearGradient id="v15" gradientUnits="userSpaceOnUse" x1="0" y1="0" x2="0" y2="27"><stop offset="0" stop-color="#ffffff"/><stop offset=".55" stop-color="#e9f8fe"/><stop offset="1" stop-color="#3fc2f3"/></linearGradient></defs><rect x="5" y="2.5" width="15" height="2.2" fill="#5ad0f9"/><rect x="5" y="6" width="15" height="14" fill="url(#v15)"/><g stroke="#3a3e41" stroke-width="1.2"><path d="M7 9.5 H15 M7 12.5 H13 M7 15.5 H12"/></g><path fill="#fff" stroke="#3a3e41" stroke-width="1" d="M11 17.5 L23.5 4.5 L25.5 6.5 L13 19.5 L10.5 20Z"/><rect x="1" y="19.5" width="25" height="5.5" rx="1" fill="#5ad0f9"/><rect x="3" y="21" width="20" height="1.6" fill="#e9f8fe"/></svg>
<svg class="a" style="left:276px;top:895px" width="28" height="29" viewBox="0 0 28 29"><defs><linearGradient id="u16" gradientUnits="userSpaceOnUse" x1="0" y1="0" x2="0" y2="29"><stop offset="0" stop-color="#4ec8f5"/><stop offset=".42" stop-color="#ffffff"/><stop offset=".7" stop-color="#f2fbff"/><stop offset="1" stop-color="#35bdf2"/></linearGradient><linearGradient id="v16" gradientUnits="userSpaceOnUse" x1="0" y1="0" x2="0" y2="29"><stop offset="0" stop-color="#ffffff"/><stop offset=".55" stop-color="#e9f8fe"/><stop offset="1" stop-color="#3fc2f3"/></linearGradient></defs><path fill="url(#u16)" fill-rule="evenodd" d="M11.20 4.06 L11.37 1.18 L15.63 1.18 L15.80 4.06 L18.90 5.35 L21.06 3.42 L24.08 6.44 L22.15 8.60 L23.44 11.70 L26.32 11.87 L26.32 16.13 L23.44 16.30 L22.15 19.40 L24.08 21.56 L21.06 24.58 L18.90 22.65 L15.80 23.94 L15.63 26.82 L11.37 26.82 L11.20 23.94 L8.10 22.65 L5.94 24.58 L2.92 21.56 L4.85 19.40 L3.56 16.30 L0.68 16.13 L0.68 11.87 L3.56 11.70 L4.85 8.60 L2.92 6.44 L5.94 3.42 L8.10 5.35Z M6.70 14.00 a6.8 6.8 0 1 0 13.6 0 a6.8 6.8 0 1 0 -13.6 0Z"/><path fill="#e9f8fe" d="M15.5 9.5 a3.2 3.2 0 0 0 -3 4.2 L8.2 18 L9.8 19.6 L14.1 15.3 a3.2 3.2 0 0 0 4.2 -3 L16.5 14 L15 12.5 Z"/></svg>

</body></html>
